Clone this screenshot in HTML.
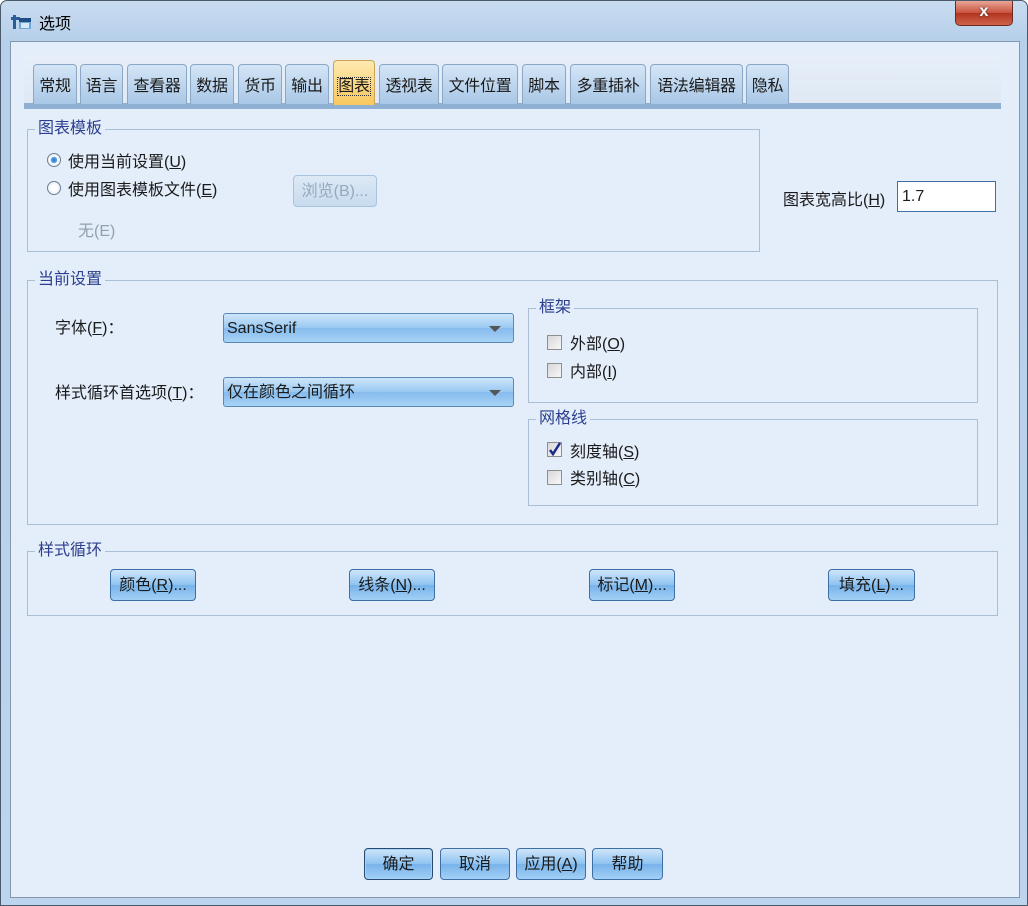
<!DOCTYPE html>
<html><head><meta charset="utf-8"><style>
*{margin:0;padding:0;box-sizing:border-box}
body{width:1028px;height:906px;overflow:hidden;font-family:"Liberation Sans","Noto Sans CJK SC",sans-serif;font-size:16px;color:#1a1a1a;background:#fff}
.win{position:absolute;left:0;top:0;width:1028px;height:906px;background:linear-gradient(180deg,#c9dcf0 0,#b6cfea 40px,#bcd4ee 100%);border:1px solid #4a5a6a;border-radius:7px 7px 0 0}
.title{position:absolute;left:38px;top:9px;font-size:16px;color:#000}
.close{position:absolute;left:954px;top:0;width:58px;height:25px;border:1px solid #6b2a22;border-top:none;border-radius:0 0 5px 5px;background:linear-gradient(#e8a597,#c9513e 50%,#b2341f 51%,#d0634b);color:#fff;font-weight:bold;text-align:center;font-size:16px;line-height:22px;text-shadow:0 0 2px #333}
.client{position:absolute;left:9px;top:40px;width:1010px;height:857px;background:#e3eefa;border:1px solid #8497ac}
.tabbg{position:absolute;left:24px;top:56px;width:977px;height:49px;background:linear-gradient(#e6eff9,#dfe8f3)}
.tabbar{position:absolute;left:24px;top:103px;width:977px;height:6px;background:#8fb0d2}
.tab{position:absolute;top:64px;height:40px;border:1px solid #8ba7c6;border-bottom:none;border-radius:4px 4px 0 0;background:linear-gradient(#d4e5f6,#a9c7e6);text-align:center;line-height:44px;font-size:16px;white-space:nowrap;letter-spacing:-0.3px}
.tab.sel{top:60px;height:45px;background:linear-gradient(#fde9b0,#f7c85e);border-color:#c9a555;line-height:52px}
.tab.sel span{outline:1px dotted #333;outline-offset:0}
.grp{position:absolute;border:1px solid #a8bfd6}
.grp>.gt{position:absolute;left:7px;top:-11px;background:#e3eefa;padding:0 3px;color:#2d3f8e;font-size:16px;line-height:20px}
.abs{position:absolute;white-space:nowrap;transform:translateY(-2px)}
u{text-decoration:underline}
.radio{position:absolute;width:14px;height:14px;border-radius:50%;border:1px solid #6d7f94;background:radial-gradient(#fff 30%,#dde4ec)}
.radio.on{background:radial-gradient(#2b7ad6 0,#5ba2e6 35%,#fff 40%,#dde4ec)}
.cb{position:absolute;width:15px;height:15px;border:1px solid #8e8f8f;background:linear-gradient(135deg,#d8d8d8,#f7f7f7)}
.btn{position:absolute;height:32px;border:1px solid #3d6fa4;border-radius:4px;background:linear-gradient(#cfe6fb,#8ec2f0 50%,#78b3ea 51%,#a2d0f6);text-align:center;line-height:32px;font-size:16px;white-space:nowrap}
.btn.dis{border-color:#a9c4de;background:linear-gradient(#dde9f5,#c7dbef);color:#95a9bf}
.combo{position:absolute;height:30px;border:1px solid #5b89b7;border-radius:3px;background:linear-gradient(#cfe6fb,#98c8f1 50%,#86bbed 51%,#a8d3f6);line-height:30px;padding-left:3px;font-size:16px}
.combo:after{content:"";position:absolute;right:12px;top:12px;border-left:6px solid transparent;border-right:6px solid transparent;border-top:6px solid #555}
</style></head><body>
<div class="win">
  <svg style="position:absolute;left:10px;top:8px" width="22" height="22" viewBox="0 0 22 22"><rect x="2" y="6" width="3" height="14" fill="#2a5d95"/><rect x="0" y="8" width="9" height="3" fill="#2a5d95"/><path d="M8 9h12v11H8z" fill="#6fa7d8"/><path d="M8 9h12v4H8z" fill="#1f4e86"/><rect x="10" y="14" width="8" height="5" fill="#d7e8f7"/></svg>
  <div class="title">选项</div>
  <div class="close">x</div>
  <div class="client"></div>
</div>
<div class="tabbg"></div>
<div class="tabbar"></div>
<div class="tab" style="left:33px;width:44px">常规</div>
<div class="tab" style="left:80px;width:43px">语言</div>
<div class="tab" style="left:127px;width:60px">查看器</div>
<div class="tab" style="left:190px;width:44px">数据</div>
<div class="tab" style="left:238px;width:44px">货币</div>
<div class="tab" style="left:285px;width:44px">输出</div>
<div class="tab sel" style="left:333px;width:42px"><span>图表</span></div>
<div class="tab" style="left:379px;width:60px">透视表</div>
<div class="tab" style="left:442px;width:76px">文件位置</div>
<div class="tab" style="left:522px;width:44px">脚本</div>
<div class="tab" style="left:570px;width:76px">多重插补</div>
<div class="tab" style="left:650px;width:93px">语法编辑器</div>
<div class="tab" style="left:746px;width:43px">隐私</div>

<div class="grp" style="left:27px;top:129px;width:733px;height:123px"><div class="gt">图表模板</div></div>
<div class="radio on" style="left:47px;top:153px"></div>
<div class="abs" style="left:68px;top:150px">使用当前设置(<u>U</u>)</div>
<div class="radio" style="left:47px;top:181px"></div>
<div class="abs" style="left:68px;top:178px">使用图表模板文件(<u>E</u>)</div>
<div class="btn dis" style="left:293px;top:175px;width:84px">浏览(B)...</div>
<div class="abs" style="left:78px;top:219px;color:#95a0ad">无(E)</div>

<div class="abs" style="left:783px;top:188px">图表宽高比(<u>H</u>)</div>
<div class="abs" style="left:897px;top:183px;width:99px;height:31px;border:1px solid #3f6fa5;background:#fff;padding:6px 0 0 4px">1.7</div>

<div class="grp" style="left:27px;top:280px;width:971px;height:245px"><div class="gt">当前设置</div></div>
<div class="abs" style="left:55px;top:316px">字体(<u>F</u>)：</div>
<div class="combo" style="left:223px;top:313px;width:291px">SansSerif</div>
<div class="abs" style="left:55px;top:381px">样式循环首选项(<u>T</u>)：</div>
<div class="combo" style="left:223px;top:377px;width:291px">仅在颜色之间循环</div>

<div class="grp" style="left:528px;top:308px;width:450px;height:95px"><div class="gt">框架</div></div>
<div class="cb" style="left:547px;top:335px"></div><div class="abs" style="left:570px;top:332px">外部(<u>O</u>)</div>
<div class="cb" style="left:547px;top:363px"></div><div class="abs" style="left:570px;top:360px">内部(<u>I</u>)</div>
<div class="grp" style="left:528px;top:419px;width:450px;height:87px"><div class="gt">网格线</div></div>
<div class="cb" style="left:547px;top:442px"><svg width="15" height="15" style="position:absolute;left:-1px;top:-1px"><path d="M3 8l3 4 7-11" stroke="#1d2a8c" stroke-width="2.5" fill="none"/></svg></div><div class="abs" style="left:570px;top:440px">刻度轴(<u>S</u>)</div>
<div class="cb" style="left:547px;top:470px"></div><div class="abs" style="left:570px;top:467px">类别轴(<u>C</u>)</div>

<div class="grp" style="left:27px;top:551px;width:971px;height:65px"><div class="gt">样式循环</div></div>
<div class="btn" style="left:110px;top:569px;width:86px">颜色(<u>R</u>)...</div>
<div class="btn" style="left:349px;top:569px;width:86px">线条(<u>N</u>)...</div>
<div class="btn" style="left:589px;top:569px;width:86px">标记(<u>M</u>)...</div>
<div class="btn" style="left:828px;top:569px;width:87px">填充(<u>L</u>)...</div>

<div class="btn" style="left:364px;top:848px;width:69px;border-color:#2b4a6e;box-shadow:inset 0 0 0 1px #9fd3f9">确定</div>
<div class="btn" style="left:440px;top:848px;width:70px">取消</div>
<div class="btn" style="left:516px;top:848px;width:70px">应用(<u>A</u>)</div>
<div class="btn" style="left:592px;top:848px;width:71px">帮助</div>
</body></html>
